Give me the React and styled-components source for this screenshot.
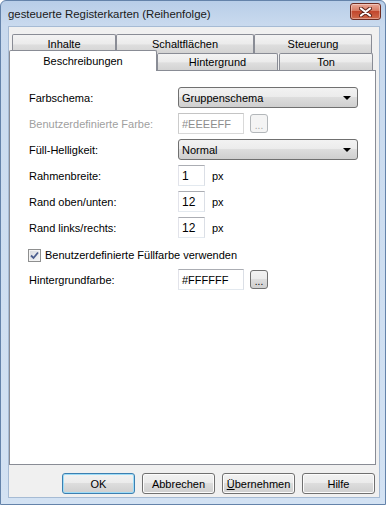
import React from "react";
import styled, { createGlobalStyle } from "styled-components";

const GlobalStyle = createGlobalStyle`
  html, body { margin: 0; padding: 0; background: #ffffff; }
  body {
    font-family: "Liberation Sans", Arial, sans-serif;
    font-size: 11px;
    color: #000;
  }
`;

const Window = styled.div`
  width: 386px;
  height: 505px;
  box-sizing: border-box;
  display: flex;
  flex-direction: column;
  border: 1px solid #6483aa;
  border-radius: 6px 6px 0 0;
  background: linear-gradient(180deg, #b8cee8 0px, #c9daee 24px, #d3e2f3 100%);
  padding: 0 5px 6px 7px;
`;

const TitleBar = styled.div`
  height: 25px;
  display: flex;
  align-items: center;
  justify-content: space-between;
`;

const Title = styled.span`
  font-size: 11.4px;
  color: #1a1a1a;
  padding-top: 1px;
`;

const CloseButton = styled.div`
  width: 31px;
  height: 17px;
  box-sizing: border-box;
  margin-right: -1px;
  margin-top: -4px;
  border: 1px solid #6e2c22;
  border-radius: 3px;
  background: linear-gradient(180deg, #e9a897 0%, #d67b64 45%, #c2472d 50%, #cf6a4c 100%);
  box-shadow: inset 0 0 0 1px rgba(255, 255, 255, 0.35);
  display: flex;
  align-items: center;
  justify-content: center;
`;

const Client = styled.div`
  flex: 1;
  display: flex;
  flex-direction: column;
  background: #f0f0f0;
  border: 1px solid #a6bbd4;
`;

const TabArea = styled.div`
  padding-top: 7px;
  margin-right: 3px;
`;

const TabRow = styled.div`
  display: flex;
  align-items: flex-end;
  height: ${(p) => p.$height}px;
  padding-left: ${(p) => p.$indent}px;
`;

const Tab = styled.div`
  width: ${(p) => p.$width}px;
  height: 100%;
  box-sizing: border-box;
  flex-shrink: 0;
  border: 1px solid #898c95;
  border-bottom: none;
  border-radius: 2px 2px 0 0;
  background: linear-gradient(180deg, #f3f3f3 0%, #ebebeb 50%, #dedede 55%, #d3d3d3 100%);
  display: flex;
  align-items: center;
  justify-content: center;
  margin-right: ${(p) => p.$gap || 0}px;
`;

const ActiveTab = styled(Tab)`
  height: 21px;
  margin: -3px 0 -1px -2px;
  background: #ffffff;
  position: relative;
  z-index: 1;
  padding-bottom: 1px;
`;

const Panel = styled.div`
  flex: 1;
  margin-right: 3px;
  border: 1px solid #898c95;
  background: #ffffff;
  padding: 16px 0 0 19px;
`;

const Form = styled.div`
  display: grid;
  grid-template-columns: 149px 1fr;
  grid-auto-rows: 21px;
  row-gap: 5px;
`;

const Label = styled.div`
  align-self: center;
  color: ${(p) => (p.$disabled ? "#a0a0a0" : "#000")};
`;

const Field = styled.div`
  display: flex;
  align-items: center;
`;

const Combo = styled.div`
  width: 180px;
  height: 21px;
  box-sizing: border-box;
  border: 1px solid #707070;
  border-radius: 3px;
  background: linear-gradient(180deg, #f2f2f2 0%, #ebebeb 50%, #dddddd 50%, #cfcfcf 100%);
  display: flex;
  align-items: center;
  justify-content: space-between;
  padding: 0 6px 0 3px;
`;

const Arrow = styled.span`
  width: 0;
  height: 0;
  border-left: 4px solid transparent;
  border-right: 4px solid transparent;
  border-top: 4px solid #000;
`;

const TextBox = styled.div`
  width: ${(p) => p.$width}px;
  height: 21px;
  box-sizing: border-box;
  border: 1px solid;
  border-color: ${(p) =>
    p.$disabled ? "#c4c4c4 #d9d9d9 #d9d9d9 #cccccc" : "#abadb3 #dbdfe6 #e3e9ef #e2e3ea"};
  background: #ffffff;
  color: ${(p) => (p.$disabled ? "#8d8d8d" : "#000")};
  font-size: ${(p) => p.$size || 11}px;
  display: flex;
  align-items: center;
  padding-left: 3px;
  padding-top: 1px;
`;

const Unit = styled.span`
  margin-left: 7px;
`;

const DotsButton = styled.div`
  width: 18px;
  height: 19px;
  box-sizing: border-box;
  margin-left: 6px;
  border: 1px solid ${(p) => (p.$disabled ? "#b3b7ba" : "#707070")};
  border-radius: 3px;
  background: ${(p) =>
    p.$disabled
      ? "#f4f4f4"
      : "linear-gradient(180deg, #f2f2f2 0%, #ebebeb 50%, #dddddd 50%, #cfcfcf 100%)"};
  color: ${(p) => (p.$disabled ? "#a6a6a6" : "#000")};
  display: flex;
  align-items: flex-end;
  justify-content: center;
  line-height: 13px;
  font-size: 10px;
`;

const CheckRow = styled.div`
  grid-column: 1 / -1;
  display: flex;
  align-items: center;
  gap: 4px;
  margin-left: -1px;
  padding-top: 3px;
`;

const CheckBox = styled.span`
  width: 13px;
  height: 13px;
  box-sizing: border-box;
  border: 1px solid #8e8f8f;
  background: linear-gradient(135deg, #d6d9de 0%, #f5f6f7 100%);
  box-shadow: inset 0 0 0 1px #f4f4f4;
  display: flex;
  align-items: center;
  justify-content: center;
`;

const ButtonBar = styled.div`
  display: flex;
  justify-content: flex-end;
  gap: 7px;
  margin: 8px 4px 3px 0;
`;

const PushButton = styled.div`
  width: 73px;
  height: 21px;
  box-sizing: border-box;
  border: 1px solid ${(p) => (p.$default ? "#3c7fb1" : "#707070")};
  border-radius: 3px;
  background: linear-gradient(180deg, #f2f2f2 0%, #ebebeb 50%, #dddddd 50%, #cfcfcf 100%);
  box-shadow: ${(p) => (p.$default ? "inset 0 0 0 1px #9edcf7" : "inset 0 0 0 1px #fcfcfc")};
  display: flex;
  align-items: center;
  justify-content: center;
`;

const row1 = [
  { label: "Inhalte", width: 104 },
  { label: "Schaltflächen", width: 138 },
  { label: "Steuerung", width: 118 },
];

export default function App() {
  return (
    <>
      <GlobalStyle />
      <Window>
        <TitleBar>
          <Title>gesteuerte Registerkarten (Reihenfolge)</Title>
          <CloseButton>
            <svg width="13" height="10" viewBox="0 0 13 10">
              <path d="M2 1.5 L11 8.5 M11 1.5 L2 8.5" stroke="#5b2219" strokeWidth="4" strokeLinecap="round" fill="none" />
              <path d="M2 1.5 L11 8.5 M11 1.5 L2 8.5" stroke="#ffffff" strokeWidth="2.2" strokeLinecap="round" fill="none" />
            </svg>
          </CloseButton>
        </TitleBar>
        <Client>
          <TabArea>
            <TabRow $height={19} $indent={3}>
              {row1.map((t) => (
                <Tab key={t.label} $width={t.width}>{t.label}</Tab>
              ))}
            </TabRow>
            <TabRow $height={17} $indent={2}>
              <ActiveTab $width={148}>Beschreibungen</ActiveTab>
              <Tab $width={121} $gap={1}>Hintergrund</Tab>
              <Tab $width={94}>Ton</Tab>
            </TabRow>
          </TabArea>
          <Panel>
            <Form>
              <Label>Farbschema:</Label>
              <Field>
                <Combo>
                  <span>Gruppenschema</span>
                  <Arrow />
                </Combo>
              </Field>

              <Label $disabled>Benutzerdefinierte Farbe:</Label>
              <Field>
                <TextBox $width={66} $disabled>#EEEEFF</TextBox>
                <DotsButton $disabled>...</DotsButton>
              </Field>

              <Label>Füll-Helligkeit:</Label>
              <Field>
                <Combo>
                  <span>Normal</span>
                  <Arrow />
                </Combo>
              </Field>

              <Label>Rahmenbreite:</Label>
              <Field>
                <TextBox $width={27} $size={12}>1</TextBox>
                <Unit>px</Unit>
              </Field>

              <Label>Rand oben/unten:</Label>
              <Field>
                <TextBox $width={27} $size={12}>12</TextBox>
                <Unit>px</Unit>
              </Field>

              <Label>Rand links/rechts:</Label>
              <Field>
                <TextBox $width={27} $size={12}>12</TextBox>
                <Unit>px</Unit>
              </Field>

              <CheckRow>
                <CheckBox>
                  <svg width="9" height="9" viewBox="0 0 9 9">
                    <path d="M1 4.5 L3.5 7 L8 1.5" stroke="#4a5d8e" strokeWidth="1.8" fill="none" />
                  </svg>
                </CheckBox>
                <span>Benutzerdefinierte Füllfarbe verwenden</span>
              </CheckRow>

              <Label>Hintergrundfarbe:</Label>
              <Field>
                <TextBox $width={66}>#FFFFFF</TextBox>
                <DotsButton>...</DotsButton>
              </Field>
            </Form>
          </Panel>
          <ButtonBar>
            <PushButton $default>OK</PushButton>
            <PushButton>Abbrechen</PushButton>
            <PushButton>
              <span><u>Ü</u>bernehmen</span>
            </PushButton>
            <PushButton>Hilfe</PushButton>
          </ButtonBar>
        </Client>
      </Window>
    </>
  );
}
